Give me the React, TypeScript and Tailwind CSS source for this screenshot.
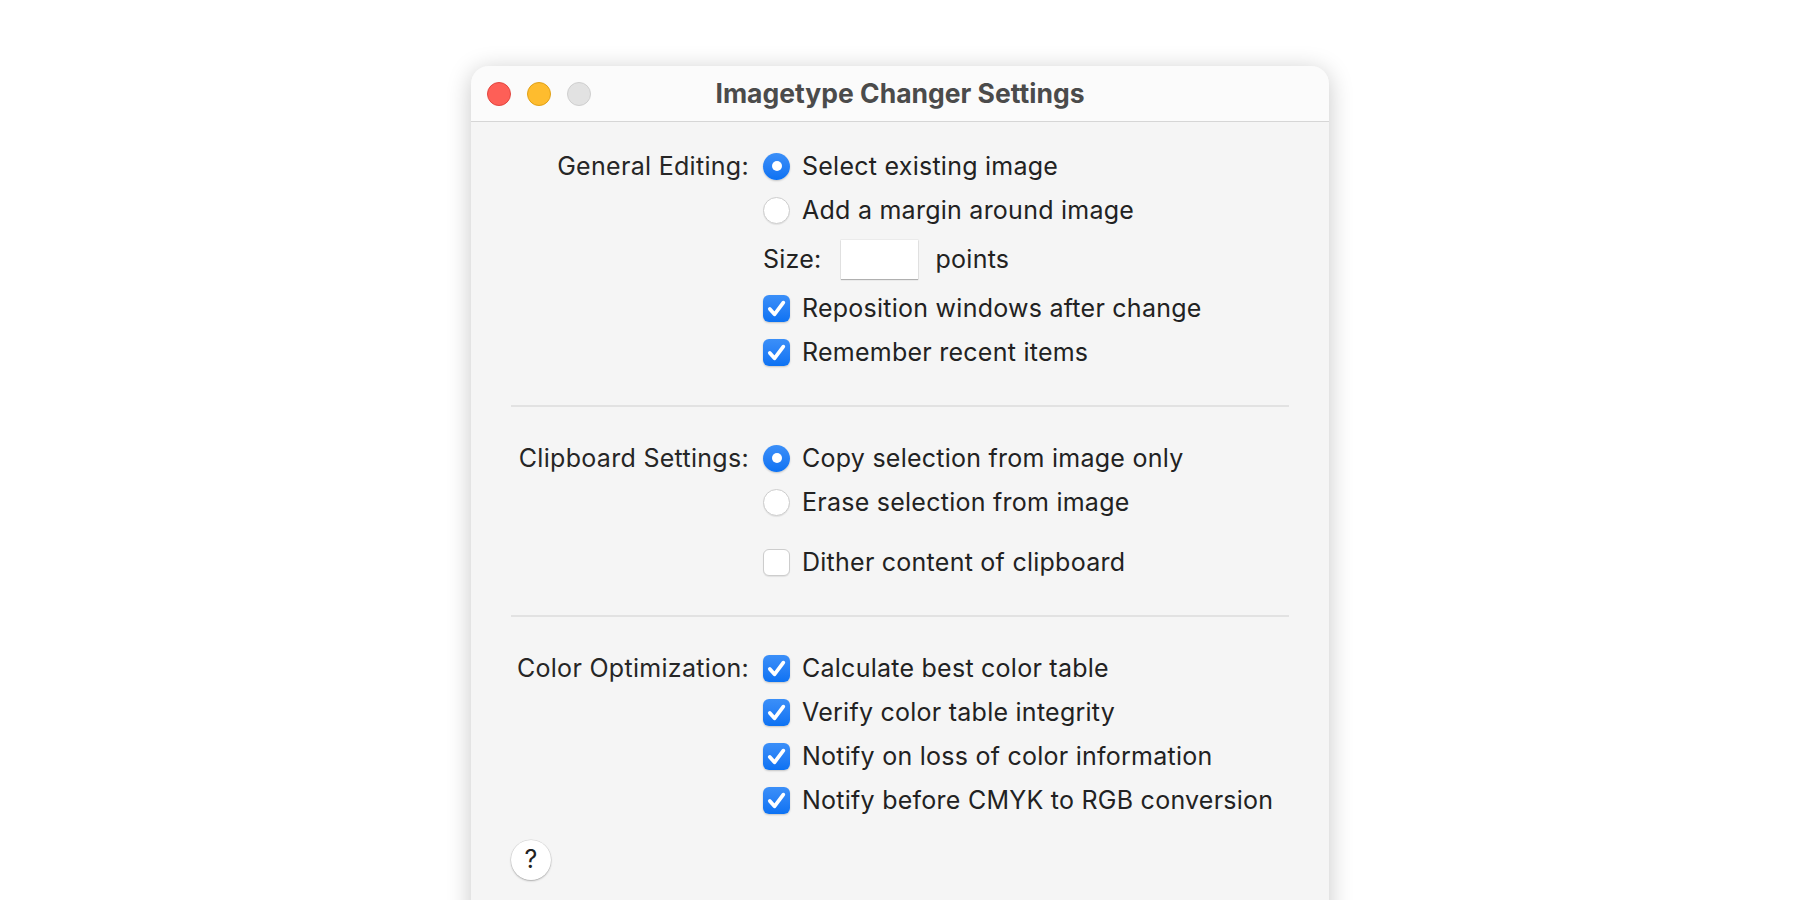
import React from 'react';

const font = { fontFamily: 'Inter, "Liberation Sans", sans-serif' };

const Radio = ({ checked }: { checked?: boolean }) =>
    checked ? (
        <span className="w-[27px] h-[27px] rounded-full bg-gradient-to-b from-[#3b8ff8] to-[#0b72f3] shadow-[0_1px_2px_rgba(0,0,0,0.2)] flex items-center justify-center shrink-0">
            <span className="w-[10px] h-[10px] rounded-full bg-white" />
        </span>
    ) : (
        <span className="w-[27px] h-[27px] rounded-full bg-white border border-[#cdcdcd] shadow-[0_1px_1px_rgba(0,0,0,0.08)] shrink-0" />
    );

const Check = ({ checked }: { checked?: boolean }) =>
    checked ? (
        <span className="w-[27px] h-[27px] rounded-[6px] bg-gradient-to-b from-[#3b8ff8] to-[#0b72f3] shadow-[0_1px_2px_rgba(0,0,0,0.2)] flex items-center justify-center shrink-0">
            <svg width="27" height="27" viewBox="0 0 27 27">
                <path d="M6.8 14 L11.5 19.3 L20.3 7.6" fill="none" stroke="white" strokeWidth="3.7" strokeLinecap="round" strokeLinejoin="round" />
            </svg>
        </span>
    ) : (
        <span className="w-[27px] h-[27px] rounded-[6px] bg-white border border-[#cdcdcd] shadow-[0_1px_1px_rgba(0,0,0,0.08)] shrink-0" />
    );

const Row = ({ children }: { children: React.ReactNode }) => (
    <div className="h-[44px] flex items-center gap-[12px]">{children}</div>
);

const Text = ({ children }: { children: React.ReactNode }) => (
    <span className="translate-y-[1px]">{children}</span>
);

const Section = ({ label, children }: { label: string; children: React.ReactNode }) => (
    <div className="grid grid-cols-[238px_1fr] gap-x-[14px]">
        <div className="h-[44px] pt-[2px] flex items-center justify-end text-[25px] tracking-[0.3px] text-[#262626] whitespace-nowrap">{label}</div>
        <div className="flex flex-col text-[25px] tracking-[0.25px] text-[#222]">{children}</div>
    </div>
);

const Separator = () => <div className="h-[2px] bg-[#e2e2e2]" />;

export default function App() {
    return (
        <div className="w-full h-screen overflow-hidden bg-white flex justify-center pt-[66px]" style={font}>
            <div className="w-[858px] h-[900px] rounded-t-[18px] bg-[#f5f5f5] shadow-[0_4px_24px_rgba(0,0,0,0.22)] flex flex-col overflow-hidden">
                <div className="h-[56px] shrink-0 bg-[#fbfbfb] border-b border-[#d6d6d6] flex items-center relative">
                    <div className="flex items-center gap-[16px] pl-[16px]">
                        <span className="w-[24px] h-[24px] rounded-full bg-[#fe5f57] border border-[#e2463f]" />
                        <span className="w-[24px] h-[24px] rounded-full bg-[#febc2e] border border-[#e1a116]" />
                        <span className="w-[24px] h-[24px] rounded-full bg-[#e2e2e2] border border-[#cfcfcf]" />
                    </div>
                    <div className="absolute inset-0 flex items-center justify-center text-[26.5px] font-bold text-[#4b4b4b] pointer-events-none">
                        Imagetype Changer Settings
                    </div>
                </div>
                <div className="px-[40px] pt-[22px] flex flex-col">
                    <Section label="General Editing:">
                        <Row><Radio checked /><Text>Select existing image</Text></Row>
                        <Row><Radio /><Text>Add a margin around image</Text></Row>
                        <div className="h-[54px] flex items-center">
                            <Text>Size:</Text>
                            <span className="ml-[19px] w-[77px] h-[39px] bg-white shadow-[0_1px_1px_rgba(0,0,0,0.25),0_0_0_0.5px_rgba(0,0,0,0.08)]" />
                            <span className="ml-[18px] translate-y-[1px]">points</span>
                        </div>
                        <Row><Check checked /><Text>Reposition windows after change</Text></Row>
                        <Row><Check checked /><Text>Remember recent items</Text></Row>
                    </Section>
                    <div className="mt-[31px] mb-[29px]"><Separator /></div>
                    <Section label="Clipboard Settings:">
                        <Row><Radio checked /><Text>Copy selection from image only</Text></Row>
                        <Row><Radio /><Text>Erase selection from image</Text></Row>
                        <div className="mt-[16px]">
                            <Row><Check /><Text>Dither content of clipboard</Text></Row>
                        </div>
                    </Section>
                    <div className="mt-[31px] mb-[29px]"><Separator /></div>
                    <Section label="Color Optimization:">
                        <Row><Check checked /><Text>Calculate best color table</Text></Row>
                        <Row><Check checked /><Text>Verify color table integrity</Text></Row>
                        <Row><Check checked /><Text>Notify on loss of color information</Text></Row>
                        <Row><Check checked /><Text>Notify before CMYK to RGB conversion</Text></Row>
                    </Section>
                    <div className="mt-[18px]">
                        <button className="w-[40px] h-[40px] rounded-full bg-white shadow-[0_1px_2px_rgba(0,0,0,0.25),0_0_0_0.5px_rgba(0,0,0,0.12)] flex items-center justify-center text-[25px] font-normal text-[#222]">
                            ?
                        </button>
                    </div>
                </div>
            </div>
        </div>
    );
}
